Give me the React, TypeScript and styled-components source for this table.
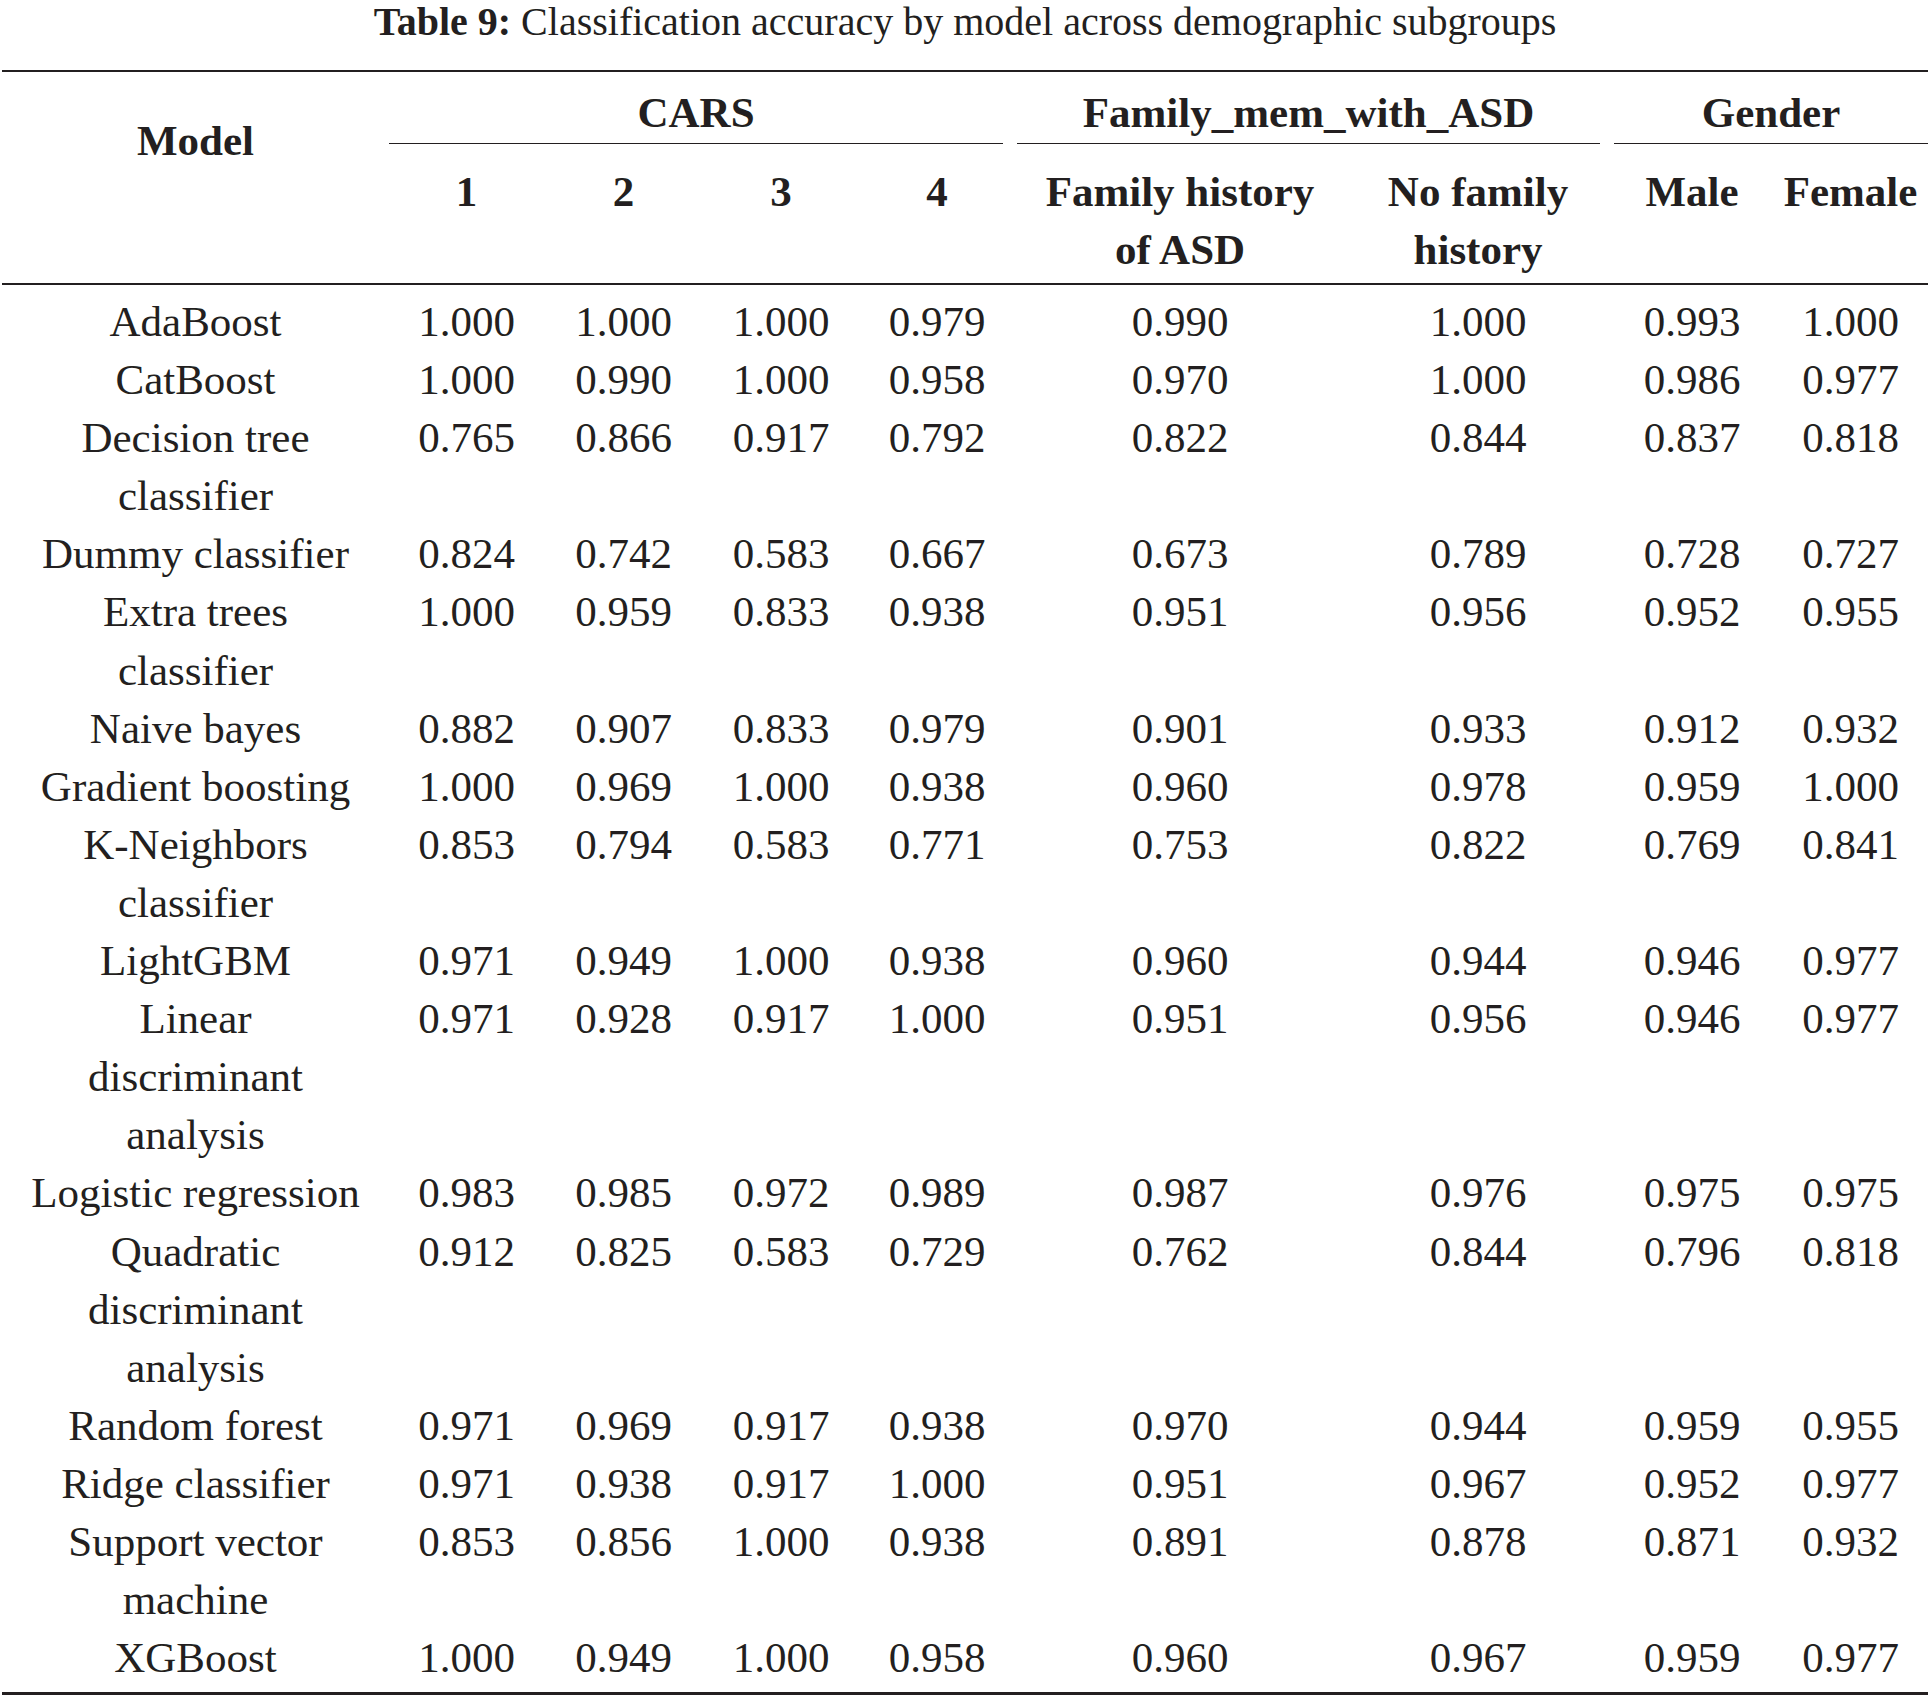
import React from 'react';
import styled, { createGlobalStyle } from 'styled-components';

const ink = '#231f20';

const GlobalStyle = createGlobalStyle`
  html, body {
    margin: 0;
    padding: 0;
    background: #ffffff;
  }
  body {
    font-family: "Liberation Serif", "Times New Roman", serif;
    color: ${ink};
  }
`;

interface ModelRow {
  name: string[];
  values: string[];
}

const columnWidths = [387, 155, 159, 156, 156, 330, 266, 162, 155];

const rows: ModelRow[] = [
  { name: ['AdaBoost'], values: ['1.000', '1.000', '1.000', '0.979', '0.990', '1.000', '0.993', '1.000'] },
  { name: ['CatBoost'], values: ['1.000', '0.990', '1.000', '0.958', '0.970', '1.000', '0.986', '0.977'] },
  { name: ['Decision tree', 'classifier'], values: ['0.765', '0.866', '0.917', '0.792', '0.822', '0.844', '0.837', '0.818'] },
  { name: ['Dummy classifier'], values: ['0.824', '0.742', '0.583', '0.667', '0.673', '0.789', '0.728', '0.727'] },
  { name: ['Extra trees', 'classifier'], values: ['1.000', '0.959', '0.833', '0.938', '0.951', '0.956', '0.952', '0.955'] },
  { name: ['Naive bayes'], values: ['0.882', '0.907', '0.833', '0.979', '0.901', '0.933', '0.912', '0.932'] },
  { name: ['Gradient boosting'], values: ['1.000', '0.969', '1.000', '0.938', '0.960', '0.978', '0.959', '1.000'] },
  { name: ['K-Neighbors', 'classifier'], values: ['0.853', '0.794', '0.583', '0.771', '0.753', '0.822', '0.769', '0.841'] },
  { name: ['LightGBM'], values: ['0.971', '0.949', '1.000', '0.938', '0.960', '0.944', '0.946', '0.977'] },
  { name: ['Linear', 'discriminant', 'analysis'], values: ['0.971', '0.928', '0.917', '1.000', '0.951', '0.956', '0.946', '0.977'] },
  { name: ['Logistic regression'], values: ['0.983', '0.985', '0.972', '0.989', '0.987', '0.976', '0.975', '0.975'] },
  { name: ['Quadratic', 'discriminant', 'analysis'], values: ['0.912', '0.825', '0.583', '0.729', '0.762', '0.844', '0.796', '0.818'] },
  { name: ['Random forest'], values: ['0.971', '0.969', '0.917', '0.938', '0.970', '0.944', '0.959', '0.955'] },
  { name: ['Ridge classifier'], values: ['0.971', '0.938', '0.917', '1.000', '0.951', '0.967', '0.952', '0.977'] },
  { name: ['Support vector', 'machine'], values: ['0.853', '0.856', '1.000', '0.938', '0.891', '0.878', '0.871', '0.932'] },
  { name: ['XGBoost'], values: ['1.000', '0.949', '1.000', '0.958', '0.960', '0.967', '0.959', '0.977'] },
];

const groups = [
  { label: 'CARS', span: 4, left: 0, right: 12 },
  { label: 'Family_mem_with_ASD', span: 2, left: 2, right: 11 },
  { label: 'Gender', span: 2, left: 3, right: 0 },
];

const subHeads = [['1'], ['2'], ['3'], ['4'], ['Family history', 'of ASD'], ['No family', 'history'], ['Male'], ['Female']];

export default function App() {
  return (
    <Page>
      <GlobalStyle />
      <Caption>
        <CaptionLabel>Table 9:</CaptionLabel> Classification accuracy by model across demographic subgroups
      </Caption>

      <Frame>
        <Table>
          <colgroup>
            {columnWidths.map((w, i) => (
              <Col key={i} $width={w} />
            ))}
          </colgroup>
          <thead>
            <tr>
              <ModelHead rowSpan={2}>Model</ModelHead>
              {groups.map((g) => (
                <GroupHead key={g.label} colSpan={g.span}>
                  <GroupLabel $left={g.left} $right={g.right}>
                    {g.label}
                  </GroupLabel>
                </GroupHead>
              ))}
            </tr>
            <tr>
              {subHeads.map((lines, i) => (
                <SubHead key={i}>
                  {lines.map((line) => (
                    <Line key={line}>{line}</Line>
                  ))}
                </SubHead>
              ))}
            </tr>
          </thead>
          <Body>
            {rows.map((row) => (
              <tr key={row.name.join(' ')}>
                <Cell>
                  {row.name.map((line) => (
                    <Line key={line}>{line}</Line>
                  ))}
                </Cell>
                {row.values.map((v, i) => (
                  <Cell key={i}>{v}</Cell>
                ))}
              </tr>
            ))}
          </Body>
        </Table>
      </Frame>
    </Page>
  );
}

const Page = styled.div`
  width: 1930px;
  font-family: "Liberation Serif", "Times New Roman", serif;
  color: ${ink};
`;

const Caption = styled.div`
  font-size: 40px;
  line-height: 44px;
  text-align: center;
  white-space: nowrap;
  margin-bottom: 26px;
`;

const CaptionLabel = styled.span`
  font-weight: 700;
`;

const Frame = styled.div`
  margin: 0 2px;
  border-top: 2px solid ${ink};
  border-bottom: 3px solid ${ink};
`;

const Table = styled.table`
  width: 100%;
  table-layout: fixed;
  border-collapse: separate;
  border-spacing: 0;
  font-size: 43px;
  line-height: 58px;
`;

const Col = styled.col<{ $width: number }>`
  width: ${({ $width }) => $width}px;
`;

const HeadBase = styled.th`
  padding: 0;
  font-weight: 700;
  text-align: center;
  white-space: nowrap;
`;

const ModelHead = styled(HeadBase)`
  vertical-align: top;
  padding-top: 40px;
  border-bottom: 2px solid ${ink};
`;

const GroupHead = styled(HeadBase)`
  vertical-align: top;
  padding-top: 12px;
`;

const GroupLabel = styled.div<{ $left: number; $right: number }>`
  margin: 0 ${({ $right }) => $right}px 0 ${({ $left }) => $left}px;
  padding-bottom: 1px;
  border-bottom: 1.5px solid ${ink};
`;

const SubHead = styled(HeadBase)`
  vertical-align: top;
  padding: 19px 0 3.5px;
  border-bottom: 2px solid ${ink};
`;

const Line = styled.div`
  white-space: nowrap;
`;

const Body = styled.tbody`
  line-height: 58.1px;

  tr:first-child > td {
    padding-top: 8.5px;
  }

  tr:last-child > td {
    padding-bottom: 5px;
  }
`;

const Cell = styled.td`
  padding: 0;
  text-align: center;
  vertical-align: top;
  white-space: nowrap;
  font-weight: 400;
`;
